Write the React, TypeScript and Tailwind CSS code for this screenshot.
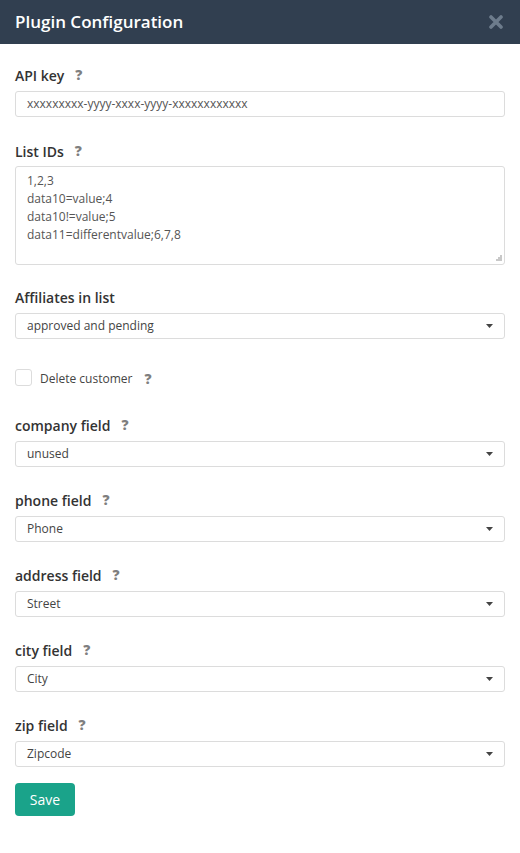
import React from "react";

function Help({ ml = "ml-[11px]" }: { ml?: string }) {
  return <span className={`${ml} text-[14px] font-extrabold text-[#7f7f7f] leading-none`}>?</span>;
}

function Label({ text, help = true, mb = "mb-[6px]" }: { text: string; help?: boolean; mb?: string }) {
  return (
    <div className={`h-[20px] ${mb} flex items-center text-[14px] font-semibold text-[#333]`}>
      <span>{text}</span>
      {help && <Help />}
    </div>
  );
}

function Select({ value }: { value: string }) {
  return (
    <div className="h-[26px] border border-[#dcdcdc] rounded-[3px] bg-white flex items-center justify-between pl-[11px] pr-[11px] text-[12px] text-[#444]">
      <span>{value}</span>
      <svg width="7" height="4" viewBox="0 0 7 4">
        <path d="M0 0 L7 0 L3.5 4 Z" fill="#444" />
      </svg>
    </div>
  );
}

function SelectField({ label, value, help = true }: { label: string; value: string; help?: boolean }) {
  return (
    <div className="mb-[23px]">
      <Label text={label} help={help} />
      <Select value={value} />
    </div>
  );
}

export default function App() {
  return (
    <div className="w-[520px] min-h-[853px] bg-white" style={{ fontFamily: '"Open Sans", "Noto Sans", sans-serif' }}>
      <div className="h-[44px] bg-[#313f50] flex items-center justify-between px-[15px]">
        <span className="text-[17px] font-semibold text-white">Plugin Configuration</span>
        <svg width="14" height="14" viewBox="0 0 14 14" className="mr-[2px]">
          <path d="M2 2 L12 12 M12 2 L2 12" stroke="#6d7c8c" strokeWidth="3.6" strokeLinecap="round" />
        </svg>
      </div>
      <div className="px-[15px] pt-[21px]">
        <div className="mb-[24px]">
          <Label text="API key" />
          <div className="h-[26px] border border-[#dcdcdc] rounded-[3px] flex items-center pl-[11px] text-[12px] text-[#555]">
            xxxxxxxxx-yyyy-xxxx-yyyy-xxxxxxxxxxxx
          </div>
        </div>
        <div className="mb-[22px]">
          <Label text="List IDs" mb="mb-[5px]" />
          <div className="relative h-[99px] border border-[#dcdcdc] rounded-[3px] pl-[11px] pt-[5px] text-[12px] leading-[18px] text-[#555]">
            <div>1,2,3</div>
            <div>data10=value;4</div>
            <div>data10!=value;5</div>
            <div>data11=differentvalue;6,7,8</div>
            <svg width="7" height="7" viewBox="0 0 7 7" className="absolute right-[2px] bottom-[2px]">
              <rect x="5" y="0" width="2" height="2" fill="#c8c8c8" />
              <rect x="3" y="2" width="2" height="2" fill="#c8c8c8" />
              <rect x="5" y="2" width="2" height="2" fill="#c8c8c8" />
              <rect x="1" y="4" width="2" height="2" fill="#c8c8c8" />
              <rect x="3" y="4" width="2" height="2" fill="#c8c8c8" />
              <rect x="5" y="4" width="2" height="2" fill="#c8c8c8" />
            </svg>
          </div>
        </div>
        <SelectField label="Affiliates in list" value="approved and pending" help={false} />
        <div className="pt-[6px] mb-[29px] h-[24px] flex items-center">
          <div className="w-[17px] h-[17px] border border-[#dcdcdc] rounded-[3px] bg-white self-start mt-[1px]" />
          <span className="ml-[8px] text-[12px] text-[#444] leading-[18px] mt-[3px]">Delete customer</span>
          <span className="ml-[12px] mt-[3px] text-[14px] font-extrabold text-[#7f7f7f] leading-none">?</span>
        </div>
        <SelectField label="company field" value="unused" />
        <SelectField label="phone field" value="Phone" />
        <SelectField label="address field" value="Street" />
        <SelectField label="city field" value="City" />
        <div className="mb-[16px]">
          <Label text="zip field" />
          <Select value="Zipcode" />
        </div>
        <button className="h-[33px] w-[60px] rounded-[4px] bg-[#1aa38a] text-white text-[14px] flex items-center justify-center">
          Save
        </button>
      </div>
    </div>
  );
}
